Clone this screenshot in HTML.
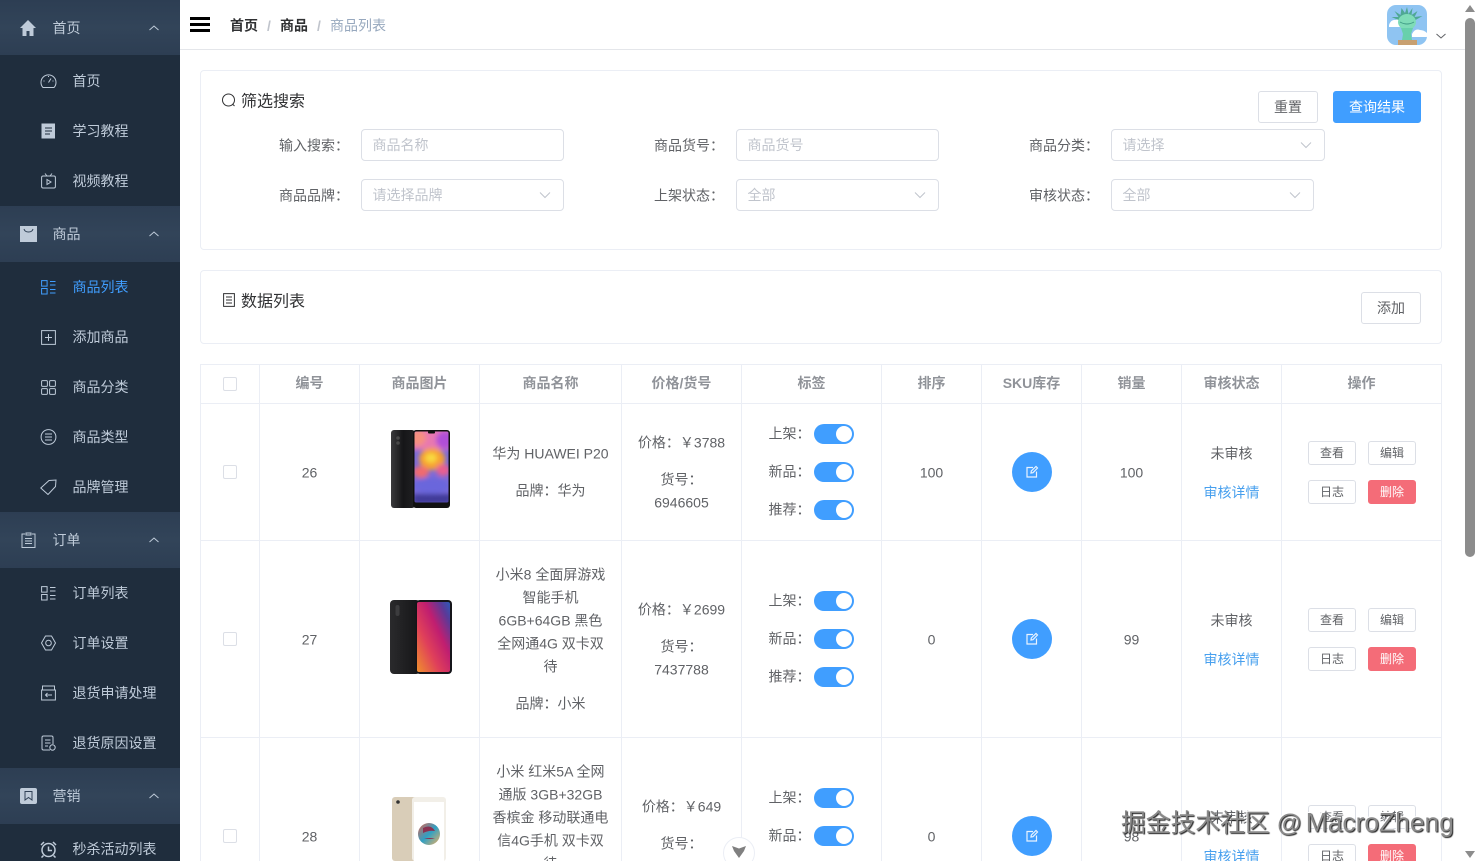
<!DOCTYPE html>
<html lang="zh"><head><meta charset="utf-8"><title>商品列表</title>
<style>
*{box-sizing:border-box}
html,body{margin:0;padding:0;width:1477px;height:861px;overflow:hidden;background:#fff}
body{position:relative;font-family:"Liberation Sans","Noto Sans CJK SC",sans-serif;font-size:14px;color:#606266}
.a{position:absolute}
.t{position:absolute;white-space:nowrap;line-height:20px;height:20px;transform:translateY(.5px)}
.c{text-align:center;transform:translate(-.5px,.5px)}
#side{position:absolute;left:0;top:0;width:180px;height:861px;background:#1f2d3d;overflow:hidden}
.g{position:absolute;left:0;width:180px;height:56px;background:linear-gradient(#2d3e53,#324459 50%,#2d3e53)}
.m{position:absolute;white-space:nowrap;line-height:20px;color:#bfcbd9;font-size:14px;transform:translateX(-.5px)}
#side svg{position:absolute;fill:none;stroke:#bfcbd9;stroke-width:1}
.card{position:absolute;left:200px;width:1242px;border:1px solid #ebeef5;border-radius:4px;background:#fff}
.inp{position:absolute;height:32px;border:1px solid #dcdfe6;border-radius:4px;background:#fff;color:#c0c4cc;line-height:30px;padding-left:10.500px}
.inp svg{position:absolute;right:12px;top:11px;width:12px;height:8px;fill:none;stroke:#c0c4cc;stroke-width:1}
.btn{position:absolute;border:1px solid #dcdfe6;border-radius:3px;background:#fff;text-align:center;color:#606266}
.blue{background:#409eff;border-color:#409eff;color:#fff}
.s{width:48px;height:24px;line-height:22px;font-size:12px}
.red{background:#f46c78;border-color:#f46c78;color:#fff}
.v{position:absolute;width:1px;background:#ebeef5;top:364px;height:497px}
.h{position:absolute;left:200px;width:1242px;height:1px;background:#ebeef5}
.th{position:absolute;top:373px;line-height:20px;text-align:center;font-weight:bold;color:#909399;transform:translateX(-.5px)}
.cb{position:absolute;left:223px;width:14px;height:14px;border:1px solid #dcdfe6;border-radius:2px;background:#fff}
.sw{position:absolute;left:814px;width:40px;height:20px;border-radius:10px;background:#409eff}
.sw:after{content:"";position:absolute;right:2px;top:2px;width:16px;height:16px;border-radius:50%;background:#fff}
.sku{position:absolute;left:1012px;width:40px;height:40px;border-radius:50%;background:#409eff}
.sku svg{position:absolute;left:13px;top:13px;width:14px;height:14px;fill:none;stroke:#e8f3ff;stroke-width:1.200}
.lk{color:#48a0ee}
</style></head><body>

<div id="side">
<div class="g" style="top:0;height:55px"></div>
<div class="g" style="top:206px"></div>
<div class="g" style="top:512px"></div>
<div class="g" style="top:768px"></div>

<svg style="left:19px;top:19px;stroke:none" width="18" height="18" viewBox="0 0 18 18"><path d="M9 1 1 9h2.500v8h4v-5h3v5h4V9H17z" fill="#bfcbd9" stroke="none"/></svg>
<div class="m" style="left:53px;top:18px">首页</div>
<svg style="left:149px;top:25px" width="10" height="6" viewBox="0 0 10 6"><path d="M.5 5 5 1l4.500 4"/></svg>

<svg style="left:40px;top:73px" width="17" height="16" viewBox="0 0 17 16"><path d="M3 14.500a7.500 7.500 0 1 1 11 0zM8.500 9.500 11 5.500M3.500 8h1M12.500 8h1M8.500 3v1"/></svg>
<div class="m" style="left:73px;top:71px">首页</div>
<svg style="left:41px;top:123px" width="15" height="16" viewBox="0 0 15 16"><path d="M1 1h12.500v14H1z" fill="#bfcbd9"/><path d="M4 5h7M4 8h7M4 11h5" stroke="#1f2d3d"/></svg>
<div class="m" style="left:73px;top:121px">学习教程</div>
<svg style="left:41px;top:173px" width="15" height="16" viewBox="0 0 15 16"><rect x=".6" y="3" width="13.800" height="12" rx="1.500"/><path d="M4 .5 6 3M11 .5 9 3M6 6.500v5l4-2.500z"/></svg>
<div class="m" style="left:73px;top:171px">视频教程</div>

<svg style="left:20px;top:226px" width="17" height="16" viewBox="0 0 17 16"><rect width="17" height="16" fill="#bfcbd9" stroke="none"/><path d="M4 3c1 4 8 4 9 0" stroke="#304156"/></svg>
<div class="m" style="left:53px;top:224px">商品</div>
<svg style="left:149px;top:231px" width="10" height="6" viewBox="0 0 10 6"><path d="M.5 5 5 1l4.500 4"/></svg>

<svg style="left:41px;top:280px" width="15" height="15" viewBox="0 0 15 15"><path stroke="#409eff" d="M.6.6h5.500v5.500H.6zM.6 8.500h5.500V14H.6zM9 1.500h5.500M9 5h5.500M9 9.500h5.500M9 13h5.500"/></svg>
<div class="m" style="left:73px;top:277px;color:#409eff">商品列表</div>
<svg style="left:41px;top:330px" width="15" height="15" viewBox="0 0 15 15"><path d="M14.400 14.400H.6V.6h13.800zM7.500 4v7M4 7.500h7"/></svg>
<div class="m" style="left:73px;top:327px">添加商品</div>
<svg style="left:41px;top:380px" width="15" height="15" viewBox="0 0 15 15"><rect x=".6" y=".6" width="5.800" height="5.800" rx="1"/><rect x="8.600" y=".6" width="5.800" height="5.800" rx="1"/><rect x=".6" y="8.600" width="5.800" height="5.800" rx="1"/><rect x="8.600" y="8.600" width="5.800" height="5.800" rx="1"/></svg>
<div class="m" style="left:73px;top:377px">商品分类</div>
<svg style="left:40px;top:429px" width="17" height="16" viewBox="0 0 17 16"><circle cx="8.500" cy="8" r="7.400"/><path d="M5 5h7M5 8h7M5 11h7"/></svg>
<div class="m" style="left:73px;top:427px">商品类型</div>
<svg style="left:40px;top:479px" width="17" height="16" viewBox="0 0 17 16"><path d="M.8 9 9 1.500l7-.5-.5 6.500L8 15.500zM12.500 4.500h.01"/></svg>
<div class="m" style="left:73px;top:477px">品牌管理</div>

<svg style="left:21px;top:532px" width="15" height="16" viewBox="0 0 15 16"><path d="M4 2H1v13.500h13V2h-3M5 1h5v2H5zM4 6.500h7M4 9h7M4 11.500h7"/></svg>
<div class="m" style="left:53px;top:530px">订单</div>
<svg style="left:149px;top:537px" width="10" height="6" viewBox="0 0 10 6"><path d="M.5 5 5 1l4.500 4"/></svg>

<svg style="left:41px;top:586px" width="15" height="15" viewBox="0 0 15 15"><path d="M.6.6h5.500v5.500H.6zM.6 8.500h5.500V14H.6zM9 1.500h5.500M9 5h5.500M9 9.500h5.500M9 13h5.500"/></svg>
<div class="m" style="left:73px;top:583px">订单列表</div>
<svg style="left:41px;top:635px" width="15" height="16" viewBox="0 0 15 16"><path d="M4.500 1h6l4 7-4 7h-6l-4-7z" stroke-linejoin="round"/><circle cx="7.500" cy="8" r="2.800"/></svg>
<div class="m" style="left:73px;top:633px">订单设置</div>
<svg style="left:41px;top:685px" width="15" height="16" viewBox="0 0 15 16"><path d="M1.500 1h12v4H1.500zM.6 5h13.800v10H.6zM11 10H4.500M6.500 8l-2 2 2 2"/></svg>
<div class="m" style="left:73px;top:683px">退货申请处理</div>
<svg style="left:41px;top:735px" width="15" height="16" viewBox="0 0 15 16"><path d="M9 15H2.500q-1.500 0-1.500-1.500v-11Q1 1 2.500 1h8Q12 1 12 2.500V9M4 5h5.500M4 8h5.500M4 11h3"/><circle cx="11.500" cy="12.500" r="2.700"/></svg>
<div class="m" style="left:73px;top:733px">退货原因设置</div>

<svg style="left:20px;top:788px" width="17" height="16" viewBox="0 0 17 16"><rect width="17" height="16" rx="2" fill="#bfcbd9" stroke="none"/><path d="M5 3.500h7V12L8.500 9.500 5 12z" stroke="#304156"/></svg>
<div class="m" style="left:53px;top:786px">营销</div>
<svg style="left:149px;top:793px" width="10" height="6" viewBox="0 0 10 6"><path d="M.5 5 5 1l4.500 4"/></svg>

<svg style="left:40px;top:841px" width="17" height="17" viewBox="0 0 17 17"><circle cx="8.500" cy="9" r="6.500" stroke-width="1.500"/><path d="M8.500 5.500V9.500H12M1 4 4 1M16 4 13 1M3.500 14.500l-2 2M13.500 14.500l2 2" stroke-width="1.500"/></svg>
<div class="m" style="left:73px;top:839px">秒杀活动列表</div>
</div>

<!-- top bar -->
<div class="a" style="left:180px;top:49px;width:1285px;height:1px;background:#e4e6ea"></div>
<div class="a" style="left:190px;top:17px;width:20px;height:2.500px;background:#000"></div>
<div class="a" style="left:190px;top:23px;width:20px;height:2.500px;background:#000"></div>
<div class="a" style="left:190px;top:29px;width:20px;height:2.500px;background:#000"></div>
<div class="t" style="left:230px;top:15px;font-weight:bold;color:#303133">首页</div>
<div class="t" style="left:267px;top:15px;color:#c0c4cc;font-weight:bold">/</div>
<div class="t" style="left:280px;top:15px;font-weight:bold;color:#303133">商品</div>
<div class="t" style="left:317px;top:15px;color:#c0c4cc;font-weight:bold">/</div>
<div class="t" style="left:330px;top:15px;color:#97a8be">商品列表</div>

<svg class="a" style="left:1387px;top:5px" width="40" height="40" viewBox="0 0 40 40">
<defs><clipPath id="av"><rect width="40" height="40" rx="9"/></clipPath></defs>
<g clip-path="url(#av)"><rect width="40" height="40" fill="#8fc4f2"/>
<path d="M2 20q2-6 7-5 4-2 6 3l2 4H2zM25 29q3-6 8-4 4 0 7 3v4H25z" fill="#fff"/>
<path d="M20 2l1.500 7 4-6-1 7 6-4-3 6 8-1-7 4-17 0-7-3 7 0-4-6 6 4 1-7 3.500 5z" fill="#4fa894"/>
<ellipse cx="20" cy="17" rx="9" ry="8" fill="#7fdcb8"/>
<path d="M13 17q7 4 14 0" stroke="#3f9c85" fill="none"/>
<path d="M14 23h12l-2 6 1 6H15l1-6z" fill="#68d0ac"/>
<rect x="11" y="35" width="19" height="5" fill="#c8a071"/></g></svg>
<svg class="a" style="left:1436px;top:33px" width="10" height="6" viewBox="0 0 10 6"><path d="M.5 1 5 5l4.500-4" fill="none" stroke="#606266"/></svg>

<!-- search card -->
<div class="card" style="top:70px;height:180px"></div>
<svg class="a" style="left:221px;top:93px" width="15" height="15" viewBox="0 0 15 15"><circle cx="7.500" cy="7" r="6" fill="none" stroke="#303133"/><path d="M11.500 11 13.500 13" stroke="#303133"/></svg>
<div class="t" style="left:241px;top:91.500px;font-size:16px;color:#303133">筛选搜索</div>
<div class="btn" style="left:1258px;top:91px;width:60px;height:32px;line-height:30px">重置</div>
<div class="btn blue" style="left:1333px;top:91px;width:88px;height:32px;line-height:30px">查询结果</div>

<div class="t" style="left:279px;top:135px">输入搜索：</div>
<div class="inp" style="left:361px;top:129px;width:203px">商品名称</div>
<div class="t" style="left:654px;top:135px">商品货号：</div>
<div class="inp" style="left:736px;top:129px;width:203px">商品货号</div>
<div class="t" style="left:1029px;top:135px">商品分类：</div>
<div class="inp" style="left:1111px;top:129px;width:214px">请选择<svg viewBox="0 0 12 8"><path d="M1 1.500 6 6.500 11 1.500"/></svg></div>

<div class="t" style="left:279px;top:185px">商品品牌：</div>
<div class="inp" style="left:361px;top:179px;width:203px">请选择品牌<svg viewBox="0 0 12 8"><path d="M1 1.500 6 6.500 11 1.500"/></svg></div>
<div class="t" style="left:654px;top:185px">上架状态：</div>
<div class="inp" style="left:736px;top:179px;width:203px">全部<svg viewBox="0 0 12 8"><path d="M1 1.500 6 6.500 11 1.500"/></svg></div>
<div class="t" style="left:1029px;top:185px">审核状态：</div>
<div class="inp" style="left:1111px;top:179px;width:203px">全部<svg viewBox="0 0 12 8"><path d="M1 1.500 6 6.500 11 1.500"/></svg></div>

<!-- data card -->
<div class="card" style="top:270px;height:74px"></div>
<svg class="a" style="left:223px;top:293px" width="12" height="14" viewBox="0 0 12 14"><path d="M.6.6h10.800v12.800H.6zM3 4h6M3 7h6M3 10h6" fill="none" stroke="#303133"/></svg>
<div class="t" style="left:241px;top:291.500px;font-size:16px;color:#303133">数据列表</div>
<div class="btn" style="left:1361px;top:292px;width:60px;height:32px;line-height:30px">添加</div>

<!-- table grid -->
<div class="h" style="top:364px"></div><div class="h" style="top:403px"></div><div class="h" style="top:540px"></div><div class="h" style="top:737px"></div>
<div class="v" style="left:200px"></div><div class="v" style="left:259px"></div><div class="v" style="left:359px"></div><div class="v" style="left:479px"></div><div class="v" style="left:621px"></div><div class="v" style="left:741px"></div><div class="v" style="left:881px"></div><div class="v" style="left:981px"></div><div class="v" style="left:1081px"></div><div class="v" style="left:1181px"></div><div class="v" style="left:1281px"></div><div class="v" style="left:1441px"></div>

<div class="cb" style="top:377px"></div>
<div class="th" style="left:260px;width:100px">编号</div>
<div class="th" style="left:360px;width:120px">商品图片</div>
<div class="th" style="left:480px;width:142px">商品名称</div>
<div class="th" style="left:622px;width:120px">价格/货号</div>
<div class="th" style="left:742px;width:140px">标签</div>
<div class="th" style="left:882px;width:100px">排序</div>
<div class="th" style="left:982px;width:100px">SKU库存</div>
<div class="th" style="left:1082px;width:100px">销量</div>
<div class="th" style="left:1182px;width:100px">审核状态</div>
<div class="th" style="left:1282px;width:160px">操作</div>

<!-- row 1 -->
<div class="cb" style="top:465px"></div>
<div class="t c" style="left:260px;width:100px;top:462px">26</div>
<svg class="a" style="left:391px;top:430px" width="59" height="78" viewBox="0 0 59 78">
<defs><filter id="bl"><feGaussianBlur stdDeviation="2.500"/></filter><clipPath id="sc1"><rect x="23.500" y="1.500" width="34" height="71" rx="2"/></clipPath><linearGradient id="bk" x1="0" y1="0" x2="1" y2="0"><stop offset="0" stop-color="#3a3a3c"/><stop offset=".5" stop-color="#161618"/><stop offset="1" stop-color="#202022"/></linearGradient></defs>
<rect x="0" y="0" width="24" height="78" rx="3" fill="url(#bk)"/>
<rect x="22" y="0" width="37" height="78" rx="3" fill="#111"/>
<g clip-path="url(#sc1)"><rect x="23" y="0" width="35" height="73" fill="#7a6ad8"/>
<g filter="url(#bl)"><rect x="20" y="-2" width="40" height="22" fill="#e878b0"/><circle cx="54" cy="10" r="9" fill="#b050d8"/><circle cx="27" cy="8" r="8" fill="#f59080"/><ellipse cx="41" cy="29" rx="13" ry="11" fill="#f7a030"/><ellipse cx="40" cy="28" rx="6" ry="5" fill="#f8d840"/><ellipse cx="30" cy="42" rx="8" ry="6" fill="#f06a70"/><ellipse cx="52" cy="40" rx="7" ry="6" fill="#e85f90"/><ellipse cx="40" cy="56" rx="18" ry="8" fill="#6a66dc"/><rect x="22" y="64" width="38" height="10" fill="#3f3a98"/></g></g>
<rect x="37" y="1" width="7" height="2.500" rx="1" fill="#111"/>
<circle cx="7" cy="8" r="1.800" fill="#484848"/><circle cx="7" cy="13" r="1.800" fill="#484848"/></svg>
<div class="t c" style="left:480px;width:142px;top:443px">华为 HUAWEI P20</div>
<div class="t c" style="left:480px;width:142px;top:480px">品牌：华为</div>
<div class="t c" style="left:622px;width:120px;top:432px">价格：￥3788</div>
<div class="t c" style="left:622px;width:120px;top:469px">货号：</div>
<div class="t c" style="left:622px;width:120px;top:492px">6946605</div>
<div class="t" style="left:768.500px;top:423px">上架：</div><div class="sw" style="top:424px"></div>
<div class="t" style="left:768.500px;top:461px">新品：</div><div class="sw" style="top:462px"></div>
<div class="t" style="left:768.500px;top:499px">推荐：</div><div class="sw" style="top:500px"></div>
<div class="t c" style="left:882px;width:100px;top:462px">100</div>
<div class="sku" style="top:452px"><svg viewBox="0 0 14 14"><path d="M8 2.500H2v9.500h9.500V6.500M6 8l.3-2L11 1.500l1.500 1.500L8 7.700z"/></svg></div>
<div class="t c" style="left:1082px;width:100px;top:462px">100</div>
<div class="t c" style="left:1182px;width:100px;top:443px">未审核</div>
<div class="t c lk" style="left:1182px;width:100px;top:482px">审核详情</div>
<div class="btn s" style="left:1308px;top:441px">查看</div><div class="btn s" style="left:1368px;top:441px">编辑</div>
<div class="btn s" style="left:1308px;top:480px">日志</div><div class="btn s red" style="left:1368px;top:480px">删除</div>

<!-- row 2 -->
<div class="cb" style="top:632px"></div>
<div class="t c" style="left:260px;width:100px;top:629px">27</div>
<svg class="a" style="left:390px;top:600px" width="62" height="75" viewBox="0 0 62 75">
<defs><linearGradient id="p2" x1="0" y1="1" x2="1" y2="0"><stop offset="0" stop-color="#f0902c"/><stop offset=".35" stop-color="#e0405a"/><stop offset=".62" stop-color="#c01e70"/><stop offset=".85" stop-color="#5a3a98"/><stop offset="1" stop-color="#2c5ab8"/></linearGradient><linearGradient id="bk2" x1="0" y1="0" x2="1" y2="0"><stop offset="0" stop-color="#2a2a2c"/><stop offset="1" stop-color="#151517"/></linearGradient></defs>
<rect x="0" y="0" width="30" height="74" rx="4" fill="url(#bk2)"/>
<rect x="26" y="0" width="36" height="74" rx="4" fill="#15151a"/>
<rect x="27" y="2" width="33" height="70" rx="2" fill="url(#p2)"/>
<rect x="5.500" y="5" width="4" height="11" rx="2" fill="#3c3c3e"/></svg>
<div class="t c" style="left:480px;width:142px;top:564px">小米8 全面屏游戏</div>
<div class="t c" style="left:480px;width:142px;top:587px">智能手机</div>
<div class="t c" style="left:480px;width:142px;top:610px">6GB+64GB 黑色</div>
<div class="t c" style="left:480px;width:142px;top:633px">全网通4G 双卡双</div>
<div class="t c" style="left:480px;width:142px;top:656px">待</div>
<div class="t c" style="left:480px;width:142px;top:693px">品牌：小米</div>
<div class="t c" style="left:622px;width:120px;top:599px">价格：￥2699</div>
<div class="t c" style="left:622px;width:120px;top:636px">货号：</div>
<div class="t c" style="left:622px;width:120px;top:659px">7437788</div>
<div class="t" style="left:768.500px;top:590px">上架：</div><div class="sw" style="top:591px"></div>
<div class="t" style="left:768.500px;top:628px">新品：</div><div class="sw" style="top:629px"></div>
<div class="t" style="left:768.500px;top:666px">推荐：</div><div class="sw" style="top:667px"></div>
<div class="t c" style="left:882px;width:100px;top:629px">0</div>
<div class="sku" style="top:619px"><svg viewBox="0 0 14 14"><path d="M8 2.500H2v9.500h9.500V6.500M6 8l.3-2L11 1.500l1.500 1.500L8 7.700z"/></svg></div>
<div class="t c" style="left:1082px;width:100px;top:629px">99</div>
<div class="t c" style="left:1182px;width:100px;top:610px">未审核</div>
<div class="t c lk" style="left:1182px;width:100px;top:649px">审核详情</div>
<div class="btn s" style="left:1308px;top:608px">查看</div><div class="btn s" style="left:1368px;top:608px">编辑</div>
<div class="btn s" style="left:1308px;top:647px">日志</div><div class="btn s red" style="left:1368px;top:647px">删除</div>

<!-- row 3 -->
<div class="cb" style="top:829px"></div>
<div class="t c" style="left:260px;width:100px;top:826px">28</div>
<svg class="a" style="left:391px;top:797px" width="56" height="64" viewBox="0 0 56 64">
<defs><linearGradient id="p3" x1="0" y1="0" x2="1" y2="1"><stop offset="0" stop-color="#e0604c"/><stop offset=".5" stop-color="#2fa0c4"/><stop offset="1" stop-color="#f0b060"/></linearGradient></defs>
<rect x="1" y="0" width="26" height="64" rx="3" fill="#d9cdb8"/>
<rect x="21" y="0" width="34" height="64" rx="3" fill="#f2efe8"/>
<rect x="23" y="5" width="30" height="59" fill="#fff"/>
<ellipse cx="38" cy="37" rx="11" ry="11" fill="url(#p3)"/>
<path d="M32 31q8-4 12 3-6-1-12 2zM33 42q6-2 11 0" fill="#8a3050"/>
<circle cx="7" cy="5" r="1.800" fill="#333"/></svg>
<div class="t c" style="left:480px;width:142px;top:761px">小米 红米5A 全网</div>
<div class="t c" style="left:480px;width:142px;top:784px">通版 3GB+32GB</div>
<div class="t c" style="left:480px;width:142px;top:807px">香槟金 移动联通电</div>
<div class="t c" style="left:480px;width:142px;top:830px">信4G手机 双卡双</div>
<div class="t c" style="left:480px;width:142px;top:853px">待</div>
<div class="t c" style="left:622px;width:120px;top:796px">价格：￥649</div>
<div class="t c" style="left:622px;width:120px;top:833px">货号：</div>
<div class="t" style="left:768.500px;top:787px">上架：</div><div class="sw" style="top:788px"></div>
<div class="t" style="left:768.500px;top:825px">新品：</div><div class="sw" style="top:826px"></div>
<div class="t c" style="left:882px;width:100px;top:826px">0</div>
<div class="sku" style="top:816px"><svg viewBox="0 0 14 14"><path d="M8 2.500H2v9.500h9.500V6.500M6 8l.3-2L11 1.500l1.500 1.500L8 7.700z"/></svg></div>
<div class="t c" style="left:1082px;width:100px;top:826px">98</div>
<div class="t c" style="left:1182px;width:100px;top:807px">未审核</div>
<div class="t c lk" style="left:1182px;width:100px;top:846px">审核详情</div>
<div class="btn s" style="left:1308px;top:805px">查看</div><div class="btn s" style="left:1368px;top:805px">编辑</div>
<div class="btn s" style="left:1308px;top:844px">日志</div><div class="btn s red" style="left:1368px;top:844px">删除</div>

<!-- floating chevron -->
<div class="a" style="left:723px;top:837px;width:32px;height:32px;border-radius:50%;background:#fff;border:1px solid #ebeef5"></div>
<svg class="a" style="left:732px;top:846px" width="14" height="12" viewBox="0 0 14 12"><path d="M0 0 7 2.500 14 0 12 5 7 12 2 5z" fill="#808080"/></svg>

<!-- scrollbar -->
<div class="a" style="left:1465px;top:0;width:12px;height:861px;background:#fff"></div>
<svg class="a" style="left:1465px;top:5px" width="10" height="7" viewBox="0 0 10 7"><path d="M5 0 10 7H0z" fill="#8c8c8c"/></svg>
<div class="a" style="left:1465px;top:18px;width:10px;height:539px;border-radius:5px;background:#8c8c8c"></div>
<svg class="a" style="left:1465px;top:851px" width="10" height="7" viewBox="0 0 10 7"><path d="M0 0H10L5 7z" fill="#8c8c8c"/></svg>

<!-- watermark -->
<div class="t" style="left:1121px;top:805px;height:34px;line-height:34px;font-size:24.800px;color:#8a8a8a;text-shadow:1px 1px 1px #222,-1px -1px 0 #fff">掘金技术社区 @ <span style="font-size:26.400px;margin-left:-3px">MacroZheng</span></div>
</body></html>
